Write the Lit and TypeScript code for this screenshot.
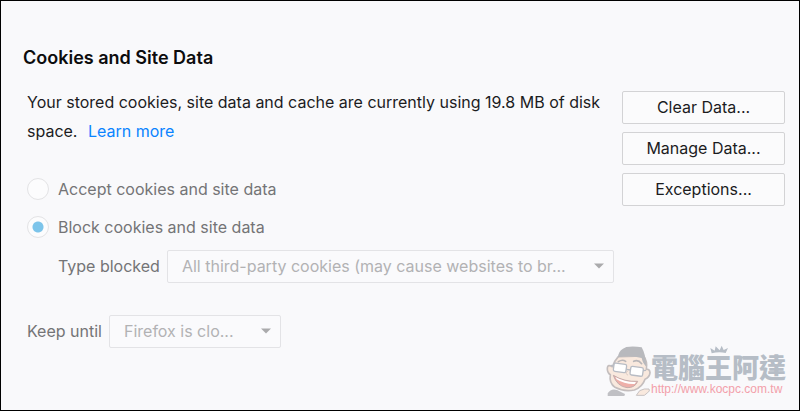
import { LitElement, html, css, svg } from "lit";
import { customElement } from "lit/decorators.js";

const arrow = svg`<svg class="arrow" viewBox="0 0 10 6" aria-hidden="true"><path d="M0 0.5h10L5 5.5z" /></svg>`;

@customElement("site-mark")
class SiteMark extends LitElement {
  static styles = css`
    :host {
      display: flex;
      align-items: flex-end;
    }
    .face {
      width: 52px;
      height: 52px;
      margin-right: -6px;
      flex: none;
    }
    .words {
      display: flex;
      flex-direction: column;
      position: relative;
    }
    .name {
      font: 900 27px/30px "Noto Sans CJK TC", sans-serif;
      color: #b6bdc6;
    }
    .url {
      font: 12px/14px "Liberation Sans", sans-serif;
      color: #f3a0aa;
    }
    .crown {
      position: absolute;
      left: 58px;
      top: -7px;
      width: 20px;
      height: 9px;
    }
  `;
  render() {
    return html`
      <svg class="face" viewBox="18 18 156 156" aria-hidden="true">
        <path d="M26 166q10-16 28-10l24 12-2 6H26z" fill="#c0c0c4" />
        <path d="M112 172l10-14 14-5 14 0q4 6-4 11l-10 8z" fill="#f9e9de" stroke="#c6c1c2" stroke-width="3" />
        <path
          d="M58 56Q44 72 40 86Q26 78 25 90Q24 104 34 110Q30 136 48 148Q74 162 106 156Q130 148 138 124Q152 118 153 104Q152 92 142 94Q146 70 134 54Z"
          fill="#f9e9de" stroke="#c4bebe" stroke-width="5" stroke-linejoin="round" />
        <path d="M57 58Q58 40 72 32L82 27Q104 24 128 28Q140 48 142 86Q132 78 128 60Q94 50 57 58z" fill="#b8b9bd" />
        <path d="M58 71q12-8 22-1M104 70q14-6 24 7" fill="none" stroke="#b9b6b8" stroke-width="5" stroke-linecap="round" />
        <g fill="#fff" stroke="#b8bcc4" stroke-width="4">
          <rect x="44" y="77" width="38" height="25" rx="5" transform="rotate(8 63 89)" />
          <rect x="94" y="87" width="38" height="26" rx="5" transform="rotate(8 113 100)" />
        </g>
        <path d="M82 94l13 2M44 84l-8-2M132 98l9-1" stroke="#b8bcc4" stroke-width="4" />
        <path d="M86 99q-10 8 0 12" fill="none" stroke="#dccbc4" stroke-width="3" stroke-linecap="round" />
        <path d="M43 112Q76 132 116 130Q108 150 84 149Q54 145 43 112z" fill="#eeafa9" stroke="#c4adac" stroke-width="3" />
        <path d="M49 117Q78 133 111 132L107 138Q76 139 53 124z" fill="#fff" />
      </svg>
      <div class="words">
        <svg class="crown" viewBox="0 0 60 27" aria-hidden="true">
          <path d="M8 25L4 9l13 8L20 4l12 12L38 2l6 13 13-6-7 15Q30 19 8 25z" fill="#b6bdc6" />
        </svg>
        <span class="name">電腦王阿達</span>
        <span class="url">http://www.kocpc.com.tw</span>
      </div>
    `;
  }
}

@customElement("app-root")
class AppRoot extends LitElement {
  static styles = css`
    :host {
      display: block;
      font: 16px/29px Inter, sans-serif;
      color: #1c1c1e;
    }
    * {
      box-sizing: border-box;
    }
    main {
      position: relative;
      min-height: 100vh;
      padding: 42px 14px 24px 22px;
      border: 1px solid #000;
      background: #f9f9fb;
    }
    h2 {
      margin: 0 0 15px;
      font-size: 18px;
      line-height: 30px;
      font-weight: 600;
      color: #0c0c0d;
    }
    .columns {
      display: grid;
      grid-template-columns: minmax(0, 1fr) 163px;
      column-gap: 8px;
      padding-left: 4px;
    }
    p {
      margin: 0 0 24px;
    }
    a {
      color: #0a84ff;
      text-decoration: none;
      margin-left: 6px;
    }
    .buttons {
      display: flex;
      flex-direction: column;
      gap: 8px;
      padding-top: 3px;
    }
    button {
      height: 33px;
      padding: 0;
      border: 1px solid #d3d3d5;
      border-radius: 2px;
      background: #fbfbfc;
      font: inherit;
      line-height: 29px;
      color: inherit;
    }
    .choice {
      display: flex;
      align-items: center;
      gap: 9px;
      height: 38px;
      color: #747476;
    }
    input {
      appearance: none;
      flex: none;
      width: 22px;
      height: 22px;
      margin: 0;
      border: 1px solid #e3e3e5;
      border-radius: 50%;
      background: #fcfcfd;
    }
    input:checked {
      background: radial-gradient(circle, #7cc4ea 5px, #fcfcfd 6px);
    }
    .field {
      display: flex;
      align-items: center;
      gap: 7px;
      color: #747476;
    }
    .blocked {
      padding-left: 31px;
      margin: 4px 0 32px;
    }
    .pick {
      position: relative;
      display: flex;
    }
    .blocked .pick {
      flex: 1;
    }
    .until .pick {
      width: 172px;
    }
    select {
      appearance: none;
      width: 100%;
      height: 33px;
      padding: 0 32px 0 14px;
      border: 1px solid #e3e3e6;
      border-radius: 2px;
      background: #fafafc;
      font: inherit;
      color: #b2b2b4;
      opacity: 1;
    }
    .arrow {
      position: absolute;
      right: 10px;
      top: 13px;
      width: 10px;
      height: 6px;
      fill: #aaaaac;
      pointer-events: none;
    }
    site-mark {
      position: absolute;
      right: 13px;
      bottom: 14px;
    }
  `;
  render() {
    return html`
      <main>
        <h2>Cookies and Site Data</h2>
        <div class="columns">
          <div>
            <p>
              Your stored cookies, site data and cache are currently using 19.8 MB of disk space.
              <a href="#learn">Learn more</a>
            </p>
            <label class="choice"><input type="radio" name="policy" disabled />Accept cookies and site data</label>
            <label class="choice"><input type="radio" name="policy" disabled checked />Block cookies and site data</label>
            <div class="field blocked">
              <label for="type">Type blocked</label>
              <div class="pick">
                <select id="type" disabled><option>All third-party cookies (may cause websites to br...</option></select>
                ${arrow}
              </div>
            </div>
            <div class="field until">
              <label for="keep">Keep until</label>
              <div class="pick">
                <select id="keep" disabled><option>Firefox is clo...</option></select>
                ${arrow}
              </div>
            </div>
          </div>
          <div class="buttons">
            <button type="button">Clear Data...</button>
            <button type="button">Manage Data...</button>
            <button type="button">Exceptions...</button>
          </div>
        </div>
        <site-mark></site-mark>
      </main>
    `;
  }
}
